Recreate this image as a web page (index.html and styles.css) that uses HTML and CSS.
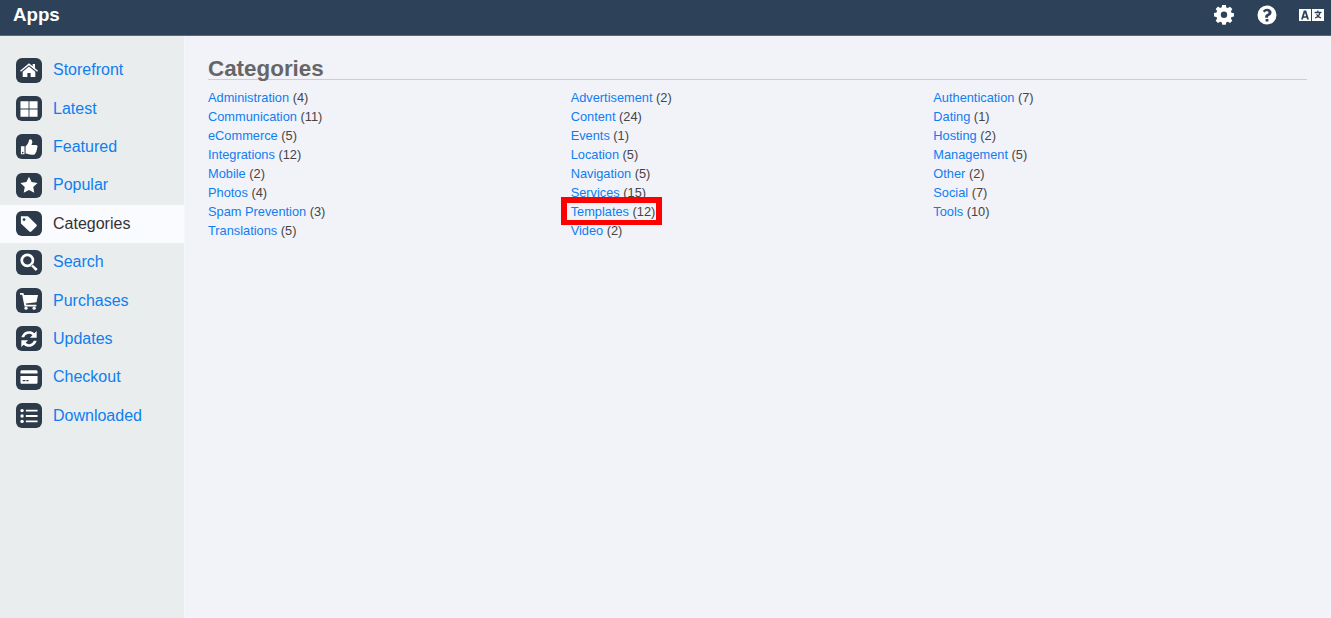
FILE: index.html
```html
<!DOCTYPE html>
<html lang="en">
<head>
<meta charset="utf-8">
<title>Apps</title>
<link rel="stylesheet" href="styles.css">
</head>
<body>
<header class="topbar">
  <div class="title">Apps</div>
  <div class="tools">
    <svg class="tool gear" width="20" height="20" viewBox="0 0 20 20"><path fill="#fff" fill-rule="evenodd" d="M8.200 .6h3.600l.5 2.500 1.500.7 2.200-1.400 2.300 2.300-1.400 2.200.6 1.500 2.500.5v3.400l-2.500.5-.6 1.500 1.400 2.200-2.300 2.300-2.200-1.400-1.500.6-.5 2.500H8.200l-.5-2.500-1.500-.6-2.200 1.400L1.700 16.400l1.400-2.200-.6-1.500L0 12.200V8.800l2.500-.5.6-1.500L1.700 4.600 4 2.300l2.200 1.400 1.500-.7z" transform="translate(0 -.7)"/><circle cx="10" cy="9.800" r="3.200" fill="#2d4259"/></svg>
    <svg class="tool help" width="20" height="20" viewBox="0 0 20 20"><path fill="#fff" fill-rule="evenodd" d="M10 .5a9.500 9.500 0 1 0 0 19 9.500 9.500 0 0 0 0-19zM8.600 14h2.800v2.600H8.600zm1.500-10.300c-2 0-3.400.9-4.300 2.400l1.800 1.400c.6-.8 1.200-1.300 2.300-1.300.9 0 1.600.5 1.600 1.200 0 .8-.6 1.100-1.500 1.600-1 .6-1.800 1.300-1.800 2.700v1h2.800v-.7c0-.6.500-.9 1.200-1.300 1.200-.7 2.300-1.500 2.300-3.300 0-2.300-2.200-3.700-4.400-3.700z"/></svg>
    <svg class="tool lang" width="25" height="12" viewBox="0 0 25 12"><rect width="12" height="12" fill="#fff"/><rect x="13" width="12" height="12" fill="#fff"/><path fill="#2d4259" d="M4.800 1.500h2.400l2.800 9H8.100l-.5-1.800H4.400l-.5 1.800H2zm1.200 2.200L4.900 7.300h2.200zM18.200 1.500h1.300v1.200h3v1.300h-.9c-.3 1.300-.9 2.400-1.600 3.200.6.400 1.300.8 2.200 1l-.5 1.300c-1-.3-1.900-.8-2.600-1.300-.7.6-1.600 1-2.700 1.300l-.5-1.300c1-.2 1.700-.6 2.300-1-.5-.6-.9-1.200-1.200-1.900h1.400c.2.400.4.700.7 1 .4-.5.800-1.200 1-2h-4.500V2.700h2.600z"/></svg>
  </div>
</header>
<div class="layout">
  <nav class="sidebar">
    <a class="item" href="#"><span class="badge"><svg viewBox="0 0 20 20"><path fill="#fff" d="M10 2.500 0 10.800l1 1.200L10 4.600l9 7.400 1-1.200-3.300-2.800V3.200h-2.600v2.700zM10 6.200 3 12v5.800h5.200v-4.600h3.600v4.600H17V12z"/></svg></span>Storefront</a>
    <a class="item" href="#"><span class="badge"><svg viewBox="0 0 20 20"><path fill="#fff" d="M.5 1.500h9v8h-9zm10 0h9v8h-9zM.5 10.500h9v8h-9zm10 0h9v8h-9z"/></svg></span>Latest</a>
    <a class="item" href="#"><span class="badge"><svg viewBox="0 0 20 20"><path fill="#fff" fill-rule="evenodd" d="M1 9.200h4V18H1zm2 6.200a.9.900 0 1 0 0 1.800.9.900 0 0 0 0-1.800zM6.200 9.200c1.700-1.200 3-3.300 3.500-5.200.2-1 .4-2.500 1.500-2.500 1.700 0 2.500 1.500 2.500 3 0 1.300-.6 2.300-1 3.300h5.100c1.100 0 1.700.9 1.700 1.800 0 .7-.3 1.300-.7 1.700.3 1.200.1 2-.6 2.600.2 1-.1 1.800-.8 2.300 0 1.300-.9 2.300-2.400 2.300h-2c-2.300 0-4.300-1-6.800-1.300z"/></svg></span>Featured</a>
    <a class="item" href="#"><span class="badge"><svg viewBox="0 0 20 20"><path fill="#fff" d="m10 .8 2.900 6 6.600.9-4.800 4.500 1.200 6.500-5.900-3.200-5.900 3.200 1.200-6.500L.5 7.700l6.600-.9z"/></svg></span>Popular</a>
    <a class="item current" href="#"><span class="badge"><svg viewBox="0 0 20 20"><path fill="#fff" fill-rule="evenodd" d="M1 1.500h7.300c.5 0 1 .2 1.400.6l8.500 8.500c.6.600.6 1.500 0 2.100l-5.700 5.700c-.6.600-1.500.6-2.100 0L1.600 9.900C1.200 9.500 1 9 1 8.500zm3.500 2a1.600 1.600 0 1 0 0 3.200 1.600 1.600 0 0 0 0-3.200z"/></svg></span>Categories</a>
    <a class="item" href="#"><span class="badge"><svg viewBox="0 0 20 20"><path fill="#fff" fill-rule="evenodd" d="M8.200 .5a7.700 7.700 0 1 1-.1 15.400A7.700 7.700 0 0 1 8.200 .5zm0 3a4.700 4.700 0 1 0 0 9.400 4.700 4.700 0 0 0 0-9.400zM13.700 12.500l6 5.200-2.300 2.300-5.400-5.700z"/></svg></span>Search</a>
    <a class="item" href="#"><span class="badge"><svg viewBox="0 0 20 20"><path fill="#fff" d="M0 1h3.800l.6 2.200H20l-1.700 8.300-11.700 1.400.3 1.300h11.300v2H5L2.400 3H0z"/><circle cx="6.700" cy="18" r="1.800" fill="#fff"/><circle cx="15.700" cy="18" r="1.800" fill="#fff"/></svg></span>Purchases</a>
    <a class="item" href="#"><span class="badge"><svg viewBox="0 0 20 20"><path fill="#fff" d="M18.500 1v7.500H11l2.800-2.800A5.800 5.800 0 0 0 4.600 8H1.500a8.800 8.800 0 0 1 14.400-4.500zM1.500 19v-7.500H9l-2.800 2.800a5.800 5.800 0 0 0 9.200-2.300h3.100a8.800 8.800 0 0 1-14.400 4.500z"/></svg></span>Updates</a>
    <a class="item" href="#"><span class="badge"><svg viewBox="0 0 20 20"><path fill="#fff" fill-rule="evenodd" d="M2 2.500h16c.8 0 1.500.7 1.500 1.500v2H.5V4c0-.8.700-1.500 1.500-1.500zM.5 9h19v7c0 .8-.7 1.500-1.500 1.500H2c-.8 0-1.500-.7-1.500-1.500zm2.500 4.200v1.500h3v-1.500zm4 0v1.500h2.500v-1.500z"/></svg></span>Checkout</a>
    <a class="item" href="#"><span class="badge"><svg viewBox="0 0 20 20"><circle cx="2.300" cy="4" r="1.900" fill="#fff"/><circle cx="2.300" cy="10" r="1.900" fill="#fff"/><circle cx="2.300" cy="16" r="1.900" fill="#fff"/><path fill="#fff" d="M6.500 3h13v2h-13zm0 6h13v2h-13zm0 6h13v2h-13z"/></svg></span>Downloaded</a>
  </nav>
  <main class="content">
    <h2 class="heading">Categories</h2>
    <div class="columns">
      <ul class="col">
        <li><a href="#">Administration</a> (4)</li>
        <li><a href="#">Communication</a> (11)</li>
        <li><a href="#">eCommerce</a> (5)</li>
        <li><a href="#">Integrations</a> (12)</li>
        <li><a href="#">Mobile</a> (2)</li>
        <li><a href="#">Photos</a> (4)</li>
        <li><a href="#">Spam Prevention</a> (3)</li>
        <li><a href="#">Translations</a> (5)</li>
      </ul>
      <ul class="col">
        <li><a href="#">Advertisement</a> (2)</li>
        <li><a href="#">Content</a> (24)</li>
        <li><a href="#">Events</a> (1)</li>
        <li><a href="#">Location</a> (5)</li>
        <li><a href="#">Navigation</a> (5)</li>
        <li><a href="#">Services</a> (15)</li>
        <li class="marked"><a href="#">Templates</a> (12)</li>
        <li><a href="#">Video</a> (2)</li>
      </ul>
      <ul class="col">
        <li><a href="#">Authentication</a> (7)</li>
        <li><a href="#">Dating</a> (1)</li>
        <li><a href="#">Hosting</a> (2)</li>
        <li><a href="#">Management</a> (5)</li>
        <li><a href="#">Other</a> (2)</li>
        <li><a href="#">Social</a> (7)</li>
        <li><a href="#">Tools</a> (10)</li>
      </ul>
    </div>
  </main>
</div>
</body>
</html>
```
FILE: styles.css
```css
*, *::before, *::after { box-sizing: border-box; }
html, body { height: 100%; }
body {
  margin: 0;
  font-family: "Liberation Sans", Arial, sans-serif;
  background: #f2f2f9;
  color: #444;
  overflow: hidden;
}
a { color: #0f7ef0; text-decoration: none; }
.topbar {
  height: 36px;
  background: #2d4259;
  border-bottom: 1px solid #5d6671;
  display: flex;
  justify-content: space-between;
  align-items: flex-start;
  padding-left: 13px;
}
.title {
  color: #fff;
  font-size: 18.72px;
  font-weight: bold;
  line-height: 30px;
}
.tools {
  display: flex;
  align-items: center;
  height: 30px;
}
.tool { display: block; }
.gear { margin-right: 23px; }
.help { margin-right: 22px; }
.lang { margin-right: 7px; }
.layout { display: flex; height: calc(100% - 36px); }
.sidebar {
  width: 185px;
  flex: none;
  background: #e9edee;
  border-right: 1px solid #f4f6f9;
  padding-top: 15px;
}
.item {
  display: flex;
  align-items: center;
  height: 38.4px;
  padding-left: 16px;
  font-size: 16px;
}
.item.current { background: #fafbfe; color: #333; }
.badge {
  width: 26px;
  height: 25px;
  border-radius: 6px;
  background: #2c3a4a;
  display: flex;
  align-items: center;
  justify-content: center;
  margin-right: 11px;
}
.badge svg { display: block; width: 18px; height: 18px; }
.content { flex: 1; padding: 20px 24px 0 23px; }
.heading {
  margin: 0 0 8px;
  padding-top: 3px;
  font-size: 22.4px;
  line-height: 20px;
  font-weight: bold;
  color: #666;
  border-bottom: 1px solid #c9ced4;
}
.columns { display: flex; }
.col {
  flex: 0 0 33%;
  margin: 0;
  padding: 0;
  list-style: none;
  font-size: 12.8px;
  line-height: 19px;
}
.marked { position: relative; }
.marked::after {
  content: "";
  position: absolute;
  left: -10px;
  top: -5px;
  width: 101px;
  height: 27.5px;
  border: 6px solid #f00;
  border-bottom-width: 5px;
  pointer-events: none;
}
```
